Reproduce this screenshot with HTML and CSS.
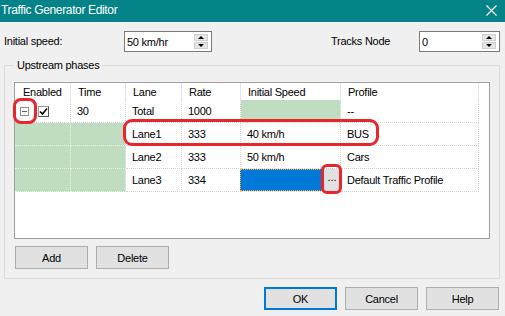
FILE: index.html
```html
<!DOCTYPE html>
<html lang="en">
  <head>
    <meta charset="UTF-8" />
    <title>Traffic Generator Editor</title>
    <link rel="stylesheet" href="styles.css">
  </head>
  <body>
    <div class="window">
      <div class="titlebar">
        <span class="titlebar--text">Traffic Generator Editor</span>
        <svg class="titlebar--close" width="11" height="11" viewBox="0 0 11 11">
          <path d="M0.5 0.5 L10.5 10.5 M10.5 0.5 L0.5 10.5" stroke="#fff" stroke-width="1.2" fill="none" />
        </svg>
      </div>

      <div class="top--row">
        <span class="field--label">Initial speed:</span>
        <div class="spin spin--speed">
          <span class="spin--value">50 km/hr</span>
          <div class="spin--btns">
            <span class="spin--up"></span>
            <span class="spin--down"></span>
          </div>
        </div>
        <span class="field--label tracks--label">Tracks Node</span>
        <div class="spin spin--node">
          <span class="spin--value">0</span>
          <div class="spin--btns">
            <span class="spin--up"></span>
            <span class="spin--down"></span>
          </div>
        </div>
      </div>

      <div class="group">
        <span class="group--title">Upstream phases</span>
        <div class="list">
          <div class="list--grid">
            <div class="head head--first">Enabled</div>
            <div class="head">Time</div>
            <div class="head">Lane</div>
            <div class="head">Rate</div>
            <div class="head">Initial Speed</div>
            <div class="head">Profile</div>
            <div class="head head--fill"></div>

            <div class="cell cell--enabled">
              <span class="tree--minus"></span>
              <span class="check">
                <svg width="9" height="9" viewBox="0 0 9 9">
                  <path d="M1 4.5 L3.5 7 L8 1.5" stroke="#000" stroke-width="1.6" fill="none" />
                </svg>
              </span>
            </div>
            <div class="cell">30</div>
            <div class="cell">Total</div>
            <div class="cell">1000</div>
            <div class="cell green"></div>
            <div class="cell">--</div>
            <div class="fill"></div>

            <div class="cell green"></div>
            <div class="cell green"></div>
            <div class="cell">Lane1</div>
            <div class="cell">333</div>
            <div class="cell">40 km/h</div>
            <div class="cell">BUS</div>
            <div class="fill"></div>

            <div class="cell green"></div>
            <div class="cell green"></div>
            <div class="cell">Lane2</div>
            <div class="cell">333</div>
            <div class="cell">50 km/h</div>
            <div class="cell">Cars</div>
            <div class="fill"></div>

            <div class="cell green"></div>
            <div class="cell green"></div>
            <div class="cell">Lane3</div>
            <div class="cell">334</div>
            <div class="cell cell--editing">
              <span class="edit--box"></span>
              <span class="edit--btn">...</span>
            </div>
            <div class="cell">Default Traffic Profile</div>
            <div class="fill"></div>
          </div>
        </div>
        <div class="group--actions">
          <button class="btn">Add</button>
          <button class="btn">Delete</button>
        </div>
      </div>

      <div class="footer">
        <button class="btn btn--default">OK</button>
        <button class="btn">Cancel</button>
        <button class="btn">Help</button>
      </div>

      <!-- red annotation rings -->
      <div class="ring ring--minus"></div>
      <div class="ring ring--lane"></div>
      <div class="ring ring--dots"></div>
    </div>
  </body>
</html>
```

FILE: styles.css
```css
* {
  box-sizing: border-box;
  margin: 0;
  padding: 0;
}
body {
  background-color: #f0f0f0;
  font-family: "Liberation Sans", Arial, sans-serif;
  font-size: 11px;
  letter-spacing: -0.25px;
  color: #000;
}
.window {
  position: relative;
  width: 505px;
  height: 316px;
  overflow: hidden;
}
.titlebar {
  height: 22px;
  background-color: #038387;
  color: #fff;
  display: flex;
  align-items: center;
  justify-content: space-between;
  padding: 0 8px 0 1px;
}
.titlebar--text {
  font-size: 12px;
  letter-spacing: -0.35px;
  margin-top: -2px;
}
.titlebar--close {
  margin-top: -2px;
}

.top--row {
  height: 43px;
  padding: 9px 5px 0 4px;
  display: flex;
  align-items: flex-start;
}
.field--label {
  width: 120px;
  line-height: 21px;
}
.tracks--label {
  width: 88px;
  margin-left: 119px;
}
.spin {
  height: 21px;
  border: 1px solid #7a7a7a;
  background-color: #fff;
  display: flex;
  align-items: center;
  justify-content: space-between;
  padding: 0 3px 0 2px;
}
.spin--speed {
  width: 88px;
}
.spin--node {
  width: 81px;
}
.spin--btns {
  width: 14px;
  height: 15px;
  display: flex;
  flex-direction: column;
  gap: 1px;
}
.spin--up,
.spin--down {
  flex: 1;
  background-color: #e6e6e6;
  border: 1px solid #cfcfcf;
  display: flex;
  align-items: center;
  justify-content: center;
}
.spin--up::after {
  content: "";
  border-left: 3px solid transparent;
  border-right: 3px solid transparent;
  border-bottom: 3px solid #000;
}
.spin--down::after {
  content: "";
  border-left: 3px solid transparent;
  border-right: 3px solid transparent;
  border-top: 3px solid #000;
}

.group {
  position: relative;
  height: 214px;
  margin: 0 5px 0 4px;
  border: 1px solid #dcdcdc;
  padding: 16px 9px 0 9px;
}
.group--title {
  position: absolute;
  top: -8px;
  left: 9px;
  padding: 0 3px;
  background-color: #f0f0f0;
  line-height: 14px;
}
.list {
  height: 157px;
  border: 1px solid #a0a0a0;
  background-color: #fff;
}
.list--grid {
  display: grid;
  grid-template-columns: 56px 55px 56px 59px 100px 138px 1fr;
  grid-template-rows: 17px repeat(4, 23px);
}
.head {
  border-right: 1px solid #e5e5e5;
  padding-left: 7px;
  display: flex;
  align-items: center;
}
.head--first {
  padding-left: 8px;
}
.head--fill {
  border-right: none;
}
.cell {
  border-right: 1px dotted #d4d4d4;
  border-bottom: 1px dotted #d4d4d4;
  padding-left: 6px;
  display: flex;
  align-items: center;
  white-space: nowrap;
}
.green {
  background-color: #c1ddc1;
  border-color: #eaf3ea;
}
.cell--enabled {
  padding-left: 5px;
  gap: 9px;
}
.tree--minus {
  width: 9px;
  height: 9px;
  border: 1px solid #919191;
  display: flex;
  align-items: center;
  justify-content: center;
}
.tree--minus::after {
  content: "";
  width: 5px;
  height: 1px;
  background-color: #4b5d80;
}
.check {
  width: 11px;
  height: 11px;
  border: 1px solid #555;
  border-top-color: #999;
  border-left-color: #999;
  display: flex;
  align-items: center;
  justify-content: center;
}
.cell--editing {
  padding: 0;
  align-items: stretch;
}
.edit--box {
  flex: 1;
  background-color: #0078d7;
  border: 1px dotted #f7a630;
  margin-left: -1px;
}
.edit--btn {
  width: 16px;
  background-color: #e1e1e1;
  display: flex;
  align-items: center;
  justify-content: center;
  letter-spacing: 0;
  padding-bottom: 7px;
}

.group--actions {
  display: flex;
  gap: 8px;
  margin-top: 7px;
  padding-left: 1px;
}
.btn {
  width: 73px;
  height: 23px;
  background-color: #e1e1e1;
  border: 1px solid #adadad;
  font-family: "Liberation Sans", Arial, sans-serif;
  font-size: 11px;
  letter-spacing: -0.25px;
  color: #000;
}
.btn--default {
  border: 2px solid #0078d7;
}
.footer {
  display: flex;
  justify-content: flex-end;
  gap: 8px;
  margin-top: 8px;
  padding-right: 6px;
}

.ring {
  position: absolute;
  border: 3px solid #e8262b;
}
.ring--minus {
  left: 13px;
  top: 98px;
  width: 24px;
  height: 26px;
  border-radius: 8px;
}
.ring--lane {
  left: 123px;
  top: 119px;
  width: 256px;
  height: 27px;
  border-radius: 9px;
}
.ring--dots {
  left: 321px;
  top: 164px;
  width: 21px;
  height: 30px;
  border-radius: 6px;
}
```
